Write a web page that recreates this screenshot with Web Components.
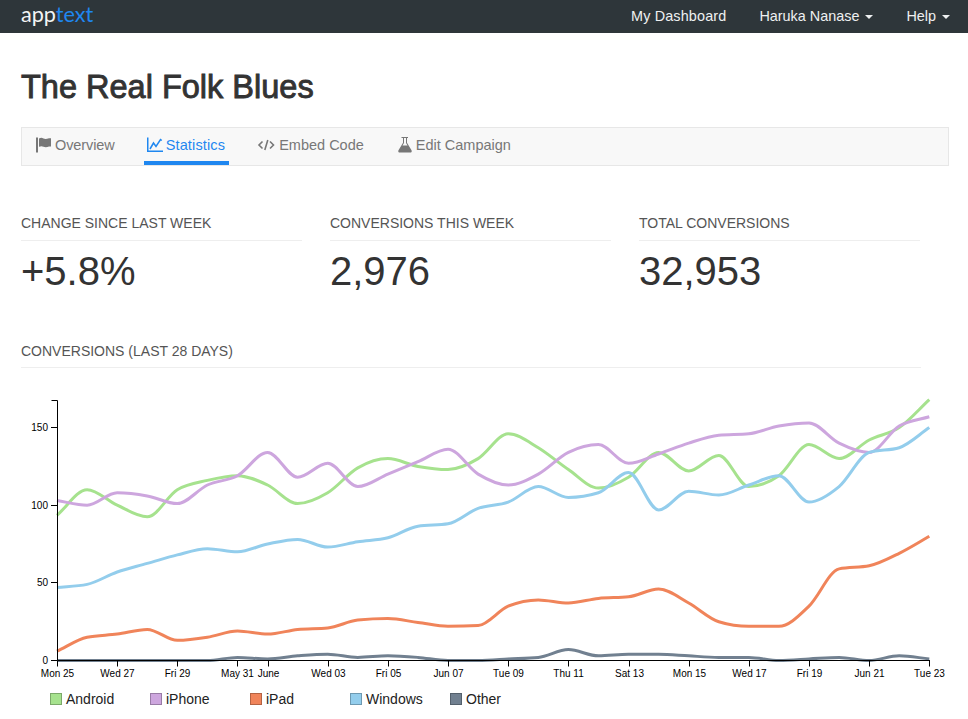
<!DOCTYPE html>
<html lang="en"><head><meta charset="utf-8"><title>The Real Folk Blues</title>
<style>
html,body{margin:0;padding:0;background:#fff;overflow:hidden}
body{font-family:"Liberation Sans",Arial,sans-serif;font-size:14px;color:#333;height:719px}
</style></head><body>
<app-navbar></app-navbar>
<app-page>
  <page-title>The Real Folk Blues</page-title>
  <tab-bar>
    <tab-item icon="flag" style="--ls:-.1px">Overview</tab-item>
    <tab-item icon="chart" active style="--ls:.15px">Statistics</tab-item>
    <tab-item icon="code">Embed Code</tab-item>
    <tab-item icon="flask">Edit Campaign</tab-item>
  </tab-bar>
  <stat-row>
    <stat-card label="Change since last week" value="+5.8%"></stat-card>
    <stat-card label="Conversions this week" value="2,976"></stat-card>
    <stat-card label="Total conversions" value="32,953"></stat-card>
  </stat-row>
  <section-heading>Conversions (last 28 days)</section-heading>
  <line-chart></line-chart>
  <chart-legend></chart-legend>
</app-page>
<script>
function shell(tag, html){
  customElements.define(tag, class extends HTMLElement{
    constructor(){super();this.attachShadow({mode:'open'}).innerHTML=html;}
  });
}
shell('app-navbar',`<style>
:host{display:flex;align-items:center;justify-content:space-between;height:33px;background:#2e363a;padding:0 18px 0 21px;box-sizing:border-box;font:14.4px "Liberation Sans",Arial,sans-serif;color:#eef0f1}
.logo{font:400 21.600px/33px Lato,sans-serif;color:#f2f4f5;margin-top:-4px}
.logo b{font-weight:400;color:#1f87f0}
nav{display:flex;gap:33px;margin-top:-1px}
.dash{letter-spacing:.15px}
.caret{display:inline-block;border:4.500px solid transparent;border-top-color:currentColor;border-bottom:0;vertical-align:2px;margin-left:2px}
</style><div class="logo">app<b>text</b></div><nav><span class="dash">My Dashboard</span><span>Haruka Nanase <i class="caret"></i></span><span>Help <i class="caret"></i></span></nav>`);
shell('app-page',`<style>:host{display:block;padding:0 19px 0 21px}</style><slot></slot>`);
shell('page-title',`<style>:host{display:block;font:400 32.500px/36px "Liberation Sans",Arial,sans-serif;-webkit-text-stroke:.9px #333;color:#333;margin:36px 0 22px}</style><slot></slot>`);
shell('tab-bar',`<style>:host{display:flex;gap:33px;height:39px;box-sizing:border-box;background:#f8f8f8;border:1px solid #e7e7e7;padding:0 0 0 14px}</style><slot></slot>`);
const icons={
 flag:'<svg width="16" height="16" viewBox="0 0 16 16"><rect x="0" y="0.500" width="2" height="15"/><path d="M3 1.500c2-1 3-.7 4.500 0s3 .6 5.500-.3H15v8.300h-2c-2 .8-4 .9-5.500.2s-2.500-.8-4.500 0z"/></svg>',
 chart:'<svg width="16" height="16" viewBox="0 0 16 16"><path d="M0 0.500h1.500v13H16V15H0z"/><path d="M3 12l3.500-6 2.500 3.500L13.500 2.500l1.300 1" fill="none" stroke="currentColor" stroke-width="1.500"/></svg>',
 code:'<svg width="18" height="16" viewBox="0 0 18 16"><path d="M5.500 4.500 2 8l3.500 3.500M13 4.500 16.500 8 13 11.500M10.800 3 7.800 13" fill="none" stroke="currentColor" stroke-width="1.600"/></svg>',
 flask:'<svg width="15" height="16" viewBox="0 0 15 16"><path d="M4.500 0h6.500v1H10v4.800l4.500 7.500c.6 1.100 0 2.200-1.200 2.200H2.700c-1.200 0-1.800-1.100-1.200-2.200L6 5.800V1H4.500z"/><path d="M7 1v5.100L5.500 8.500h5L9 6.100V1z" fill="#f8f8f8"/></svg>'};
customElements.define('tab-item',class extends HTMLElement{
  constructor(){super();this.attachShadow({mode:'open'});}
  connectedCallback(){
    this.shadowRoot.innerHTML=`<style>
:host{display:flex;align-items:center;gap:3px;height:37px;box-sizing:border-box;color:#777;font:14.500px "Liberation Sans",Arial,sans-serif;letter-spacing:var(--ls,0);position:relative;padding-bottom:4px}
:host([icon=code]),:host([icon=flask]){gap:4px}
:host([icon=code]) svg{margin-left:-1px}
:host([active]){color:#1f87f0;padding:0 4px 4px 3px;margin:0 -4px 0 -4px}
:host([active])::after{content:"";position:absolute;left:0;right:0;bottom:0;height:4px;background:#1f87f0}
svg{display:block;fill:currentColor}
</style>${icons[this.getAttribute('icon')]}<slot></slot>`;
  }
});
shell('stat-row',`<style>:host{display:grid;grid-template-columns:repeat(3,309px);margin-top:47px}</style><slot></slot>`);
customElements.define('stat-card',class extends HTMLElement{
  constructor(){super();this.attachShadow({mode:'open'});}
  connectedCallback(){
    this.shadowRoot.innerHTML=`<style>
:host{display:block;padding-right:28px}
h4{margin:0;font:14px/20px "Liberation Sans",Arial,sans-serif;color:#555;text-transform:uppercase;padding-bottom:7px;border-bottom:1px solid #eee}
div{font:40px/44px "Liberation Sans",Arial,sans-serif;color:#333;margin-top:8px}
</style><h4>${this.getAttribute('label')}</h4><div>${this.getAttribute('value')}</div>`;
  }
});
shell('section-heading',`<style>:host{display:block;width:900px;font:14px/20px "Liberation Sans",Arial,sans-serif;color:#555;text-transform:uppercase;margin-top:48px;padding-bottom:6px;border-bottom:1px solid #eee}</style><slot></slot>`);

const SERIES=[
 {n:'Android',c:'#a6e28e',d:[93.5,110,100,92.5,110,116,119,113,101,108,124,130,125,123,130,146,137,123,111,118,134,122,132,112,119,139,130,142,150,168]},
 {n:'iPhone',c:'#cda6de',d:[103,100,108,106,101,113,119,134,118,127,112,120,128,136,120,113,120,134,139,127,133,140,145,146,151,153,140,134,151,157]},
 {n:'iPad',c:'#f0845a',d:[6,15,17,20,13,15,19,17,20,21,26,27,24.5,22,22.5,35,39,37,40,41,46,37,25,22,22,35,59,61,69,80]},
 {n:'Windows',c:'#93cdec',d:[47,49,57,62.500,68,72,70,75,78,73,76.500,79,86.500,88,98,102,112,105,108,121,97,109,106.500,113,119,102,112,134,137,150]},
 {n:'Other',c:'#718090',d:[0,0,0,0,0,0,2,1,3,4,2,3,2,0,0,1,2,7,3,4,4,3,2,2,0,1,2,0,3,1]}
];
const X0=36,STEP=30.08,Y0=260.5,K=1.553;
/* monotone cubic interpolation */
function monotone(p){
  const n=p.length,h=STEP,s=[],m=[];
  for(let i=0;i<n-1;i++)s[i]=(p[i+1][1]-p[i][1])/h;
  m[0]=s[0];m[n-1]=s[n-2];
  for(let i=1;i<n-1;i++){
    if(s[i-1]*s[i]<=0)m[i]=0;
    else m[i]=(Math.sign(s[i-1])+Math.sign(s[i]))*Math.min(Math.abs(s[i-1]),Math.abs(s[i]),.25*Math.abs(s[i-1]+s[i])*1);
  }
  let d=`M${p[0][0].toFixed(1)},${p[0][1].toFixed(1)}`;
  for(let i=0;i<n-1;i++){
    d+=`C${(p[i][0]+h/3).toFixed(1)},${(p[i][1]+m[i]*h/3).toFixed(1)} ${(p[i+1][0]-h/3).toFixed(1)},${(p[i+1][1]-m[i+1]*h/3).toFixed(1)} ${p[i+1][0].toFixed(1)},${p[i+1][1].toFixed(1)}`;
  }
  return d;
}
customElements.define('line-chart',class extends HTMLElement{
  constructor(){
    super();
    const xs=[[0,'Mon 25'],[2,'Wed 27'],[4,'Fri 29'],[6,'May 31'],[7,'June'],[9,'Wed 03'],[11,'Fri 05'],[13,'Jun 07'],[15,'Tue 09'],[17,'Thu 11'],[19,'Sat 13'],[21,'Mon 15'],[23,'Wed 17'],[25,'Fri 19'],[27,'Jun 21'],[29,'Tue 23']];
    let s=`<svg width="947" height="289" viewBox="0 0 947 289">`;
    s+=SERIES.map(r=>`<path d="${monotone(r.d.map((v,i)=>[X0+i*STEP,Y0-v*K]))}" fill="none" stroke="${r.c}" stroke-width="3"/>`).join('');
    s+=`<path d="M${X0-6}.5,0.500H${X0}.500V${Y0}H${X0+873}" fill="none" stroke="#000"/>`;
    [0,50,100,150].forEach(v=>{const y=Math.round(Y0-v*K-.5)+.5;s+=`<path d="M${X0-6},${y}H${X0}" stroke="#000"/><text x="${X0-9}" y="${y+3.5}" text-anchor="end">${v}</text>`;});
    xs.forEach(([i,l])=>{const x=Math.round(X0+i*STEP)+.5;s+=`<path d="M${x},${Y0}v6" stroke="#000"/><text x="${x}" y="${Y0+16}" text-anchor="middle">${l}</text>`;});
    s+='</svg>';
    this.attachShadow({mode:'open'}).innerHTML=`<style>:host{display:block;margin-top:32px;height:289px}svg{display:block;overflow:visible}text{font:10px "Liberation Sans",Arial,sans-serif;fill:#000}</style>${s}`;
  }
});
customElements.define('chart-legend',class extends HTMLElement{
  constructor(){
    super();
    this.attachShadow({mode:'open'}).innerHTML=`<style>
:host{display:grid;grid-template-columns:repeat(5,100px);padding-left:29px;margin-top:0;font:14px/20px "Liberation Sans",Arial,sans-serif;color:#222}
span{display:flex;align-items:center;gap:4px}
i{width:12px;height:12px;box-sizing:border-box;border:1px solid rgba(0,0,0,.25);display:block}
</style>`+SERIES.map(r=>`<span><i style="background:${r.c}"></i>${r.n}</span>`).join('');
  }
});
</script>
</body></html>
